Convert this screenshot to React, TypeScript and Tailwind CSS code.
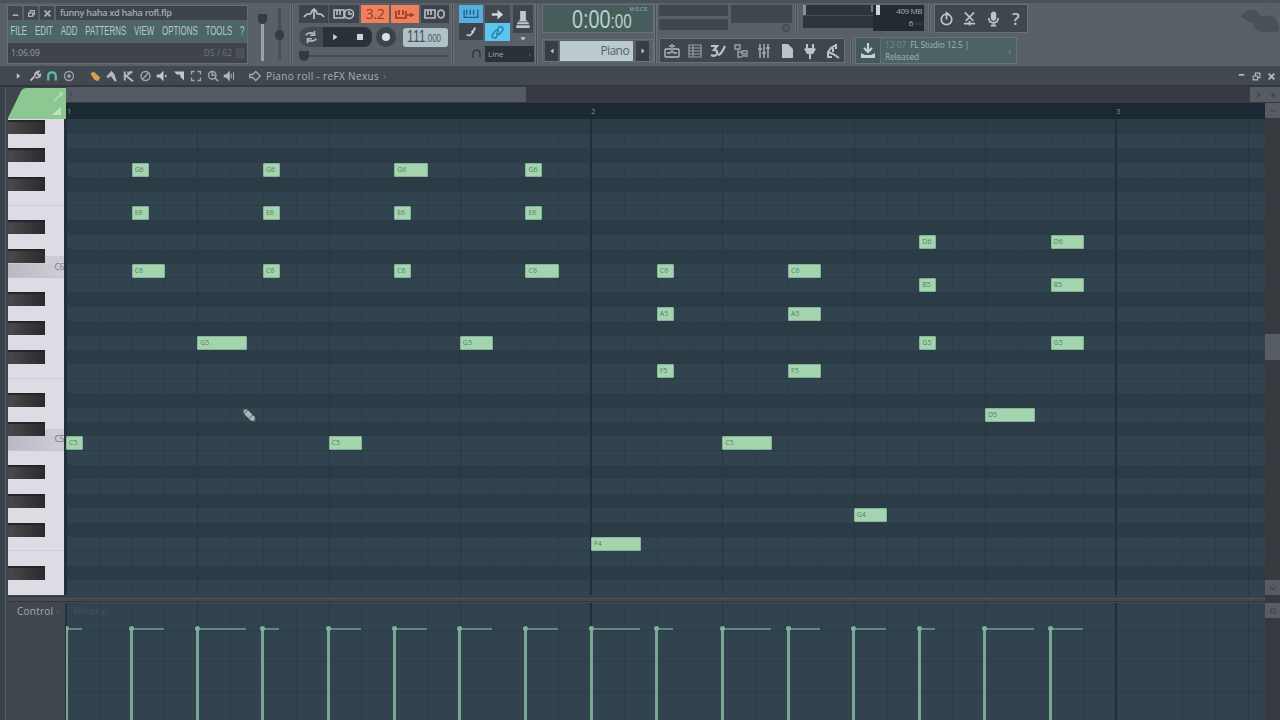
import React from "react";

const ROW = 14.4;
const STEP = 32.82;
const NAMES = ["C", "C#", "D", "D#", "E", "F", "F#", "G", "G#", "A", "A#", "B"];
const TOP_PITCH = 82;
const rows = Array.from({ length: 33 }, (_, i) => TOP_PITCH - i);
const isBlack = (p: number) => [1, 3, 6, 8, 10].includes(p % 12);
const label = (p: number) => NAMES[p % 12] + Math.floor(p / 12);

// [start step, length in steps, pitch]
const notes: [number, number, number][] = [
  [0, 0.5, 60],
  [2, 0.5, 79], [2, 0.5, 76], [2, 1, 72],
  [4, 1.5, 67],
  [6, 0.5, 79], [6, 0.5, 76], [6, 0.5, 72],
  [8, 1, 60],
  [10, 1, 79], [10, 0.5, 76], [10, 0.5, 72],
  [12, 1, 67],
  [14, 0.5, 79], [14, 0.5, 76], [14, 1, 72],
  [16, 1.5, 53],
  [18, 0.5, 72], [18, 0.5, 69], [18, 0.5, 65],
  [20, 1.5, 60],
  [22, 1, 72], [22, 1, 69], [22, 1, 65],
  [24, 1, 55],
  [26, 0.5, 74], [26, 0.5, 71], [26, 0.5, 67],
  [28, 1.5, 62],
  [30, 1, 74], [30, 1, 71], [30, 1, 67],
];

const velocities = Array.from({ length: 16 }, (_, i) => {
  const start = i * 2;
  return { start, len: Math.max(...notes.filter((n) => n[0] === start).map((n) => n[1])) };
});

function Ico({ children, className = "" }: { children: React.ReactNode; className?: string }) {
  return (
    <svg
      viewBox="0 0 16 16"
      className={"shrink-0 " + className}
      fill="none"
      stroke="currentColor"
      strokeWidth="1.8"
    >
      {children}
    </svg>
  );
}

function Sep({ className = "" }: { className?: string }) {
  return <div className={"w-[3px] shrink-0 border-x border-[#6a727a] bg-[#464d54] " + className} />;
}

function TitlePanel() {
  return (
    <div className="mt-[5px] ml-[7px] flex h-[59px] w-[241px] shrink-0 flex-col border border-[#666e75] bg-[#5a6168]">
      <div className="flex h-[14px] gap-[2px] text-[#a9b0b5]">
        {[0, 1, 2].map((i) => (
          <div key={i} className="flex w-[14px] items-center justify-center bg-[#41474e]">
            <Ico className="h-[9px] w-[9px]">
              {i === 0 && <path d="M3 11h10" strokeWidth="3" />}
              {i === 1 && <path d="M3 7h7v6H3zM6 7V3h7v7h-3" strokeWidth="2.4" />}
              {i === 2 && <path d="M3 3l10 10M13 3L3 13" strokeWidth="3.4" />}
            </Ico>
          </div>
        ))}
        <div className="flex-1 bg-[#3e444b] pl-[4px] text-[9.2px] leading-[13px] font-semibold tracking-[-0.32px] whitespace-nowrap text-[#a4abb0]">
          funny haha xd haha rofl.flp
        </div>
      </div>
      <div className="mt-[1px] h-[20px] overflow-hidden bg-[#4d6566]">
        <div className="flex w-[392px] origin-left scale-x-[0.6] gap-[13px] pl-[4px] font-['Liberation_Sans',sans-serif] text-[13.2px] leading-[20px] text-[#b3cbc8]">
          {["FILE", "EDIT", "ADD", "PATTERNS", "VIEW", "OPTIONS", "TOOLS", "?"].map((m) => (
            <span key={m}>{m}</span>
          ))}
        </div>
      </div>
      <div className="mt-[2px] flex h-[20px] items-center bg-[#3e444a] px-[3px] text-[8.5px] text-[#98a0a5]">
        <span>1:06:09</span>
        <span className="ml-auto text-[#6d757b]">D5 / 62</span>
        <div className="ml-[4px] h-[10px] w-[8px] border border-[#50575e] bg-[#474e55]" />
      </div>
    </div>
  );
}

function Sliders() {
  return (
    <div className="mt-[8px] ml-[6px] flex h-[56px] w-[34px] shrink-0 justify-between px-[4px]">
      <div className="flex w-[9px] flex-col items-center pt-[6px]">
        <div className="h-[10px] w-[9px] rounded-b-full rounded-t-sm bg-[#353c43]" />
        <div className="h-[37px] w-[3px] bg-[#9aa1a6]" />
      </div>
      <div className="flex w-[9px] flex-col items-center">
        <div className="h-[22px] w-[3px] bg-[#474e55]" />
        <div className="h-[10px] w-[9px] rounded-full bg-[#353c43]" />
        <div className="h-[20px] w-[3px] bg-[#4a5158]" />
      </div>
    </div>
  );
}

function Transport() {
  return (
    <div className="mt-[5px] ml-[6px] flex w-[150px] shrink-0 flex-col">
      <div className="flex h-[18px] gap-[1px] text-[#b9bfc3]">
        <div className="flex w-[29px] items-center justify-center bg-[#3d444b]">
          <svg viewBox="0 0 24 14" className="h-[14px] w-[24px]" fill="none" stroke="currentColor" strokeWidth="1.7">
            <path d="M12 12V3M2 10q3-4 5-3t3-3M22 10q-3-4-5-3t-3-3M9 5l3-3 3 3" />
          </svg>
        </div>
        <div className="flex w-[30px] items-center justify-center bg-[#3d444b]">
          <svg viewBox="0 0 24 14" className="h-[14px] w-[24px]" fill="none" stroke="currentColor" strokeWidth="1.6">
            <path d="M2 3h10v8H2zM5 3v5M8 3v5" /><circle cx="17" cy="7" r="4.5" /><path d="M17 4v3h3" />
          </svg>
        </div>
        <div className="ml-[1px] flex w-[28px] items-center justify-center bg-[#f0805c] text-[14px] leading-none tracking-tight text-[#933b27]">
          3.2
        </div>
        <div className="ml-[1px] flex w-[28px] items-center justify-center bg-[#f0805c] text-[#933b27]">
          <svg viewBox="0 0 24 14" className="h-[14px] w-[24px]" fill="none" stroke="currentColor" strokeWidth="1.7">
            <path d="M3 4v7h10V4M6 3v5M10 3v5M14 8h7M18 6v4" />
          </svg>
        </div>
        <div className="ml-[1px] flex w-[28px] items-center justify-center bg-[#3d444b]">
          <svg viewBox="0 0 24 14" className="h-[14px] w-[24px]" fill="none" stroke="currentColor" strokeWidth="1.6">
            <path d="M2 3h10v8H2zM5 3v5M8 3v5M15 5q3-4 6 0M21 9q-3 4-6 0M15 5v4M21 5v4" />
          </svg>
        </div>
      </div>
      <div className="mt-[4px] flex h-[20px] items-center text-[#cdd2d5]">
        <div className="flex h-[20px] w-[24px] items-center justify-center rounded-l-full bg-[#434a51]">
          <Ico className="h-[14px] w-[14px] text-[#b5bbbf]">
            <path d="M2 6q3-4 9-2M12 1v5H7M14 10q-3 4-9 2M4 15v-5h5" />
          </Ico>
        </div>
        <div className="flex h-[20px] w-[24px] items-center justify-center bg-[#2b3138]">
          <Ico className="h-[10px] w-[10px]"><path d="M5 3l7 5-7 5z" fill="currentColor" stroke="none" /></Ico>
        </div>
        <div className="flex h-[20px] w-[25px] items-center justify-center rounded-r-lg bg-[#2b3138]">
          <div className="h-[6px] w-[6px] bg-current" />
        </div>
        <div className="ml-[4px] flex h-[20px] w-[20px] items-center justify-center rounded-full bg-[#3c434a]">
          <div className="h-[8px] w-[8px] rounded-full bg-[#dde0e2]" />
        </div>
        <div className="ml-[7px] flex h-[19px] w-[45px] items-center rounded-[3px] bg-[#b1c2c7] pl-[4px]">
          <div className="flex w-[54px] shrink-0 origin-left scale-x-[0.72] items-baseline font-['Liberation_Sans',sans-serif] text-[17px] leading-[18px] text-[#3f535b]">
            111<span className="text-[11px]">.000</span>
          </div>
        </div>
      </div>
      <div className="mt-[3px] flex h-[11px] items-center">
        <div className="h-[10px] w-[10px] rounded-b-full bg-[#343a41]" />
        <div className="h-[2px] flex-1 bg-[#474e55]" />
      </div>
    </div>
  );
}

function Tools() {
  return (
    <div className="mt-[5px] ml-[5px] flex w-[76px] shrink-0 flex-col">
      <div className="flex h-[36px]">
        <div className="flex w-[52px] flex-wrap gap-x-[2px]">
          <div className="flex h-[18px] w-[24px] items-center justify-center bg-[#56aede] text-[#1d5c83]">
            <svg viewBox="0 0 20 14" className="h-[12px] w-[18px]" fill="none" stroke="currentColor" strokeWidth="1.5">
              <path d="M2 2v9h16V2M5 2v6M9 2v6M13 2v6" />
            </svg>
          </div>
          <div className="flex h-[18px] w-[25px] items-center justify-center bg-[#41484f] text-[#d3d7d9]">
            <Ico className="h-[13px] w-[13px]"><path d="M1 8h9" strokeWidth="3" /><path d="M8 2l7 6-7 6z" fill="currentColor" stroke="none" /></Ico>
          </div>
          <div className="flex h-[17px] w-[24px] items-center justify-center bg-[#3d444b] text-[#c7cccf]">
            <Ico className="h-[13px] w-[13px]"><path d="M2 12l4 1 4-4 2-6M8 9l5-5" strokeWidth="2" /></Ico>
          </div>
          <div className="flex h-[18px] w-[25px] items-center justify-center bg-[#5cc6f0] text-[#1e7ba6]">
            <Ico className="h-[15px] w-[15px]"><path d="M7 6l3-4q4-1 4 3l-4 5q-3 1-3-2M9 9l-3 5q-4 0-4-3l4-5q3-1 3 2" strokeWidth="1.4" /></Ico>
          </div>
        </div>
        <div className="ml-[2px] flex w-[20px] shrink-0 flex-col items-center">
          <div className="flex h-[28px] w-[20px] items-center justify-center bg-[#3e454c] text-[#bfc5c8]">
            <svg viewBox="0 0 18 22" className="h-[21px] w-[18px]" fill="currentColor">
              <path d="M6 2h6v9l2 2H4l2-2zM3 14h12v2H3zM2 17h14v3H2z" />
            </svg>
          </div>
          <div className="mt-[4px] h-[3px] w-[4px] rounded-b-full bg-[#b5bbbf]" />
        </div>
      </div>
      <div className="mt-[4px] flex h-[17px] items-center">
        <Ico className="ml-[12px] h-[11px] w-[11px] text-[#343b42]"><path d="M3 14V8q0-5 5-5t5 5v6" strokeWidth="2.4" /></Ico>
        <div className="ml-[3px] flex h-[16px] w-[49px] items-center justify-between bg-[#2b3138] px-[3px] text-[8px] text-[#a4abb0]">
          <span>Line</span>
          <span className="text-[#717981]">›</span>
        </div>
      </div>
    </div>
  );
}

function Clock() {
  return (
    <div className="mt-[4px] ml-[4px] flex w-[112px] shrink-0 flex-col">
      <div className="relative h-[29px] overflow-hidden border border-[#687077] bg-[#465d5c] pl-[29px] font-['Liberation_Sans',sans-serif] text-[#b6d3cc]">
        <div className="flex w-[86px] origin-left scale-x-[0.76] items-baseline text-[26px] leading-[28px]">
          <span>0:00</span>
          <span className="text-[20px]">:00</span>
        </div>
        <div className="absolute top-[1px] right-[6px] text-[5px] leading-[6px] text-[#9bb7b1]">M:S:CS</div>
      </div>
      <div className="mt-[6px] flex h-[23px] items-center border border-[#6a7279] px-[1px] text-[#c1c7ca]">
        <div className="ml-[1px] flex h-[20px] w-[13px] shrink-0 items-center justify-center bg-[#373e45]">
          <Ico className="h-[8px] w-[8px]"><path d="M11 3L5 8l6 5z" fill="currentColor" stroke="none" /></Ico>
        </div>
        <div className="ml-[2px] flex h-[20px] w-[73px] items-center justify-end bg-[#bbcace] pr-[4px] text-[12px] tracking-[-0.6px] text-[#50616a]">Piano</div>
        <div className="ml-[3px] flex h-[20px] w-[13px] shrink-0 items-center justify-center bg-[#373e45]">
          <Ico className="h-[8px] w-[8px]"><path d="M5 3l6 5-6 5z" fill="currentColor" stroke="none" /></Ico>
        </div>
      </div>
    </div>
  );
}

const mixerIcons: React.ReactNode[] = [
  <path d="M1 6h14M1 14h14M1 6v8M15 6v8M3 10h3l2-2 2 2h3M8 1v4M5 3h6" />,
  <path d="M2 2h12v12H2zM2 5h12M2 8h12M2 11h12M6 2v12" strokeWidth="1.2" />,
  <path d="M1 3h6L4 7q4 0 3 4-2 3-6 1M8 12q3 0 7-9" strokeWidth="2.2" />,
  <path d="M2 2h5v4H2zM5 6v8h4M5 9h5M9 8h5v3H9zM9 13h6" strokeWidth="1.5" />,
  <path d="M4 1v14M8 1v14M12 1v14M2 6h4M6 10h4M10 5h4" />,
  <path d="M3 1h6l5 5v9H3z" fill="currentColor" stroke="none" />,
  <path d="M4 1h2v4h4V1h2v4l2 1-3 5H9v5H7v-5H5L2 6l2-1z" fill="currentColor" stroke="none" />,
  <path d="M3 14V9l3-4 5-3M3 9l5 2 6 4M8 5v4M2 14h5M11 1v5" strokeWidth="2" />,
];

function Center() {
  return (
    <div className="mt-[4px] ml-[2px] flex w-[372px] shrink-0 flex-col">
      <div className="flex h-[29px]">
        <div className="flex w-[69px] shrink-0 flex-col gap-[3px] pt-[1px]">
          <div className="h-[11px] bg-[#3f464d]" />
          <div className="h-[11px] bg-[#3f464d]" />
        </div>
        <div className="ml-[3px] flex w-[61px] shrink-0 flex-col pt-[1px]">
          <div className="h-[18px] bg-[#3f464d]" />
          <div className="mt-[1px] mr-[2px] h-[8px] w-[8px] self-end rounded-full border border-[#3c434a] bg-[#525960]" />
        </div>
        <Sep className="ml-[3px] h-[29px]" />
        <div className="ml-[5px] flex h-[27px] w-[121px] shrink-0 bg-[#5a6168] pt-[1px]">
          <div className="flex h-[23px] w-[70px] flex-col bg-[#2c343c]">
            <div className="flex h-[11px] justify-between border-b border-[#465058]">
              <div className="h-[10px] w-[3px] bg-[#8a9297]" />
              <div className="h-[7px] w-[2px] bg-[#747c82]" />
            </div>
          </div>
          <div className="flex h-[26px] w-[51px] bg-[#222a32] text-[8px] text-[#a8b0b4]">
            <div className="ml-[3px] h-[10px] w-[4px] bg-[#cfd5d7]" />
            <div className="flex flex-1 flex-col items-end pr-[2px] leading-[12px] tracking-[-0.4px]">
              <span>409 MB</span>
              <span>6<span className="text-[#56616a]"> ▫▫▫</span></span>
            </div>
          </div>
        </div>
        <Sep className="ml-[4px] h-[29px]" />
        <div className="ml-[3px] flex w-[94px] shrink-0 items-center justify-around border border-[#697178] bg-[#3f464d] text-[#bdc3c7]">
          <Ico className="h-[15px] w-[15px]"><circle cx="8" cy="9" r="5.6" /><path d="M8 9V2l3 2" /></Ico>
          <Ico className="h-[16px] w-[15px]"><path d="M3 1l9 9M13 1L4 10M2 13h12M8 10v5" /></Ico>
          <Ico className="h-[16px] w-[15px]"><rect x="6" y="1" width="4" height="8" rx="2" fill="currentColor" /><path d="M3 7q0 5 5 5t5-5M8 12v3M5 15h6" /></Ico>
          <span className="w-[14px] text-center text-[17px] leading-none font-semibold">?</span>
        </div>
      </div>
      <div className="mt-[4px] flex h-[27px] items-center">
        <div className="flex h-[25px] w-[186px] shrink-0 items-center justify-around border border-[#697178] bg-[#3f464d] text-[#bcc2c5]">
          {mixerIcons.map((ic, i) => (
            <Ico key={i} className={i < 5 && i !== 2 ? "h-[16px] w-[16px] text-[#979fa4]" : "h-[16px] w-[16px]"}>{ic}</Ico>
          ))}
        </div>
        <Sep className="ml-[5px] h-[27px]" />
        <div className="ml-[2px] flex h-[27px] w-[162px] shrink-0 items-center border border-[#687379] bg-[#4c6264]">
          <div className="flex h-full w-[25px] items-center justify-center border-r border-[#5f7175] bg-[#45585b] text-[#c3d2d2]">
            <Ico className="h-[16px] w-[16px]"><path d="M8 0v8M4 5l4 4 4-4" strokeWidth="2.2" /><path d="M1 10v5h14v-5l-4 2H5z" fill="currentColor" stroke="none" /></Ico>
          </div>
          <div className="flex-1 pl-[4px] text-[8.4px] leading-[11.5px] tracking-[-0.15px] whitespace-nowrap text-[#9fb7b7]">
            <div><span className="text-[#718a8c]">12-07</span>&nbsp; FL Studio 12.5 |</div>
            <div>Released</div>
          </div>
          <span className="mr-[5px] text-[9px] text-[#879fa0]">›</span>
        </div>
      </div>
    </div>
  );
}

function FruitMark() {
  return (
    <div className="mt-[4px] ml-auto h-[60px] w-[50px] shrink-0">
      <svg viewBox="0 0 50 60" className="h-[60px] w-[50px]" fill="#495057">
        <path d="M11 12q3-5 10-6 6 0 8 4 3 3 6 2 6-2 10 2 5 6 4 13-3 2-7 0-5 2-11 1-7-2-8-9-3 0-5-2-4-1-7-5z" />
        <path d="M35 6l7-5M42 30q-4 15-18 26" fill="none" stroke="#535a61" />
      </svg>
    </div>
  );
}

function TopBar() {
  return (
    <div className="flex h-[66px] shrink-0 overflow-hidden border-t-[3px] border-[#4b5259] bg-[#596067]">
      <div className="-mt-[3px] flex w-full">
        <TitlePanel />
        <Sliders />
        <Sep className="mt-[4px] ml-[2px] h-[60px]" />
        <Transport />
        <Sep className="mt-[4px] ml-[2px] h-[60px]" />
        <Tools />
        <Sep className="mt-[4px] h-[60px]" />
        <Clock />
        <Sep className="mt-[4px] h-[60px]" />
        <Center />
        <FruitMark />
      </div>
    </div>
  );
}

const editIcons: [React.ReactNode, string][] = [
  [<path d="M5 3l6 5-6 5z" fill="currentColor" stroke="none" />, "w-[9px] text-[#c3c8cb]"],
  [<path d="M2 14l6-6M8 8q-1-5 5-6l-2 3 2 2 2-1q0 5-6 4" strokeWidth="2.4" />, "ml-[5px] w-[14px] text-[#b4babe]"],
  [<path d="M3 14V8q0-5 5-5t5 5v6" strokeWidth="3" />, "ml-[3px] w-[14px] text-[#56c596]"],
  [<><circle cx="8" cy="8" r="6" /><circle cx="8" cy="8" r="1.6" fill="currentColor" /></>, "ml-[3px] w-[14px] text-[#9aa1a7]"],
  [<path d="M2 5l4-3 9 8-3 5-5-2z" fill="currentColor" stroke="none" />, "ml-[12px] w-[14px] text-[#d69d4b]"],
  [<path d="M1 9l7-8 4 5 3 9h-3L7 8l-3 3z" fill="currentColor" stroke="none" />, "ml-[3px] w-[13px] text-[#b4babe]"],
  [<><path d="M3 2v12M13 2L5 8l9 7" strokeWidth="2.6" /><path d="M6 3h7" /></>, "ml-[4px] w-[13px] text-[#b4babe]"],
  [<><circle cx="8" cy="8" r="6" /><path d="M4 12l8-8" /></>, "ml-[4px] w-[13px] text-[#9fa6ab]"],
  [<path d="M1 6h4l5-5v14l-5-5H1zM12 6l3 2-3 2z" fill="currentColor" stroke="none" />, "ml-[3px] w-[14px] text-[#c3c8cb]"],
  [<path d="M1 2h13v12L9 9V6H4z" fill="currentColor" stroke="none" />, "ml-[4px] w-[13px] text-[#c3c8cb]"],
  [<path d="M2 6V2h4M10 2h4v4M14 10v4h-4M6 14H2v-4" />, "ml-[3px] w-[14px] text-[#9fa6ab]"],
  [<><circle cx="7" cy="7" r="5" /><path d="M10 10l5 5M7 3v4h4" strokeWidth="2" /></>, "ml-[3px] w-[14px] text-[#9fa6ab]"],
  [<><path d="M1 6h3l5-5v14l-5-5H1z" fill="currentColor" stroke="none" /><path d="M11 5v6M14 3v10" strokeWidth="1.2" /></>, "ml-[2px] w-[14px] text-[#b4babe]"],
];

function EditorTitle() {
  return (
    <div className="flex h-[21px] shrink-0 items-center border-b-2 border-[#32383e] bg-[#41484f] pt-[1px] pl-[6px]">
      <div className="flex items-center pl-[8px]">
        {editIcons.map(([ic, cls], i) => (
          <Ico key={i} className={"h-[12px] " + cls}>{ic}</Ico>
        ))}
        <Ico className="ml-[13px] h-[12px] w-[12px] text-[#a4abb0]"><path d="M1 6h4l4-4 6 6-6 6-4-4H1z" /></Ico>
        <span className="ml-[5px] text-[10px] leading-none tracking-[0.36px] whitespace-nowrap text-[#a9b0b5]">Piano roll - reFX Nexus</span>
        <span className="ml-[4px] text-[9px] text-[#777f86]">›</span>
      </div>
      <div className="ml-auto flex items-center gap-[6px] pr-[4px] text-[#b4babe]">
        <Ico className="h-[9px] w-[9px]"><path d="M3 5h10" strokeWidth="3" /></Ico>
        <Ico className="h-[9px] w-[9px]"><path d="M2 7h8v7H2zM6 7V2h8v8h-4" strokeWidth="2" /></Ico>
        <Ico className="h-[9px] w-[9px]"><path d="M3 3l10 10M13 3L3 13" strokeWidth="3.4" /></Ico>
      </div>
    </div>
  );
}

function Keyboard() {
  return (
    <div className="relative z-10 flex h-[476px] w-[58px] flex-col overflow-hidden border-r-2 border-[#26303a] bg-[#dddce4] pt-[0.7px]">
      {rows.map((p) => {
        const c = p % 12;
        return (
          <div
            key={p}
            style={{ height: ROW }}
            className={
              "relative flex shrink-0 " +
              (c === 0
                ? "border-b border-[#c4c3cd] bg-linear-to-r from-[#b9b9c4] to-[#cfced6]"
                : c === 5
                  ? "border-b border-[#cdccd6]"
                  : c === 1
                    ? "bg-linear-to-b from-[#dddce4] from-50% to-[#cccbd4] to-50%"
                    : "")
            }
          >
            {isBlack(p) && <div className="h-[14px] w-[37px] bg-linear-to-r from-[#4a4a4d] to-[#2b2b2e] shadow-[inset_0_2px_1px_#252529]" />}
            {c === 0 && <span className="absolute -top-[3px] right-0 text-[9px] leading-[12px] tracking-[-0.6px] text-[#777681]">{label(p)}</span>}
          </div>
        );
      })}
    </div>
  );
}

function VerticalLines() {
  return (
    <div className="pointer-events-none absolute inset-0 overflow-hidden">
      {Array.from({ length: 37 }, (_, i) => (
        <div
          key={i}
          style={{ left: i * STEP }}
          className={
            "absolute inset-y-0 " +
            (i % 16 === 0 ? "-ml-px w-[2px] bg-[#20303b]" : i % 4 === 0 ? "w-px bg-[#243743]" : "w-px bg-[#2a3d49]")
          }
        />
      ))}
    </div>
  );
}

function NoteGrid() {
  return (
    <div className="relative h-[476px] w-[1199px] overflow-hidden bg-[#2b3c47] pt-[0.7px]">
      {rows.map((p) => (
        <div
          key={p}
          style={{ height: ROW }}
          className={
            (isBlack(p) ? "bg-[#2b3c47]" : "bg-[#30434e]") +
            (p % 12 === 0 || p % 12 === 5 ? " border-b border-[#293b46]" : "")
          }
        />
      ))}
      <VerticalLines />
      {notes.map(([s, l, p], i) => (
        <div
          key={i}
          style={{ left: s * STEP, top: (TOP_PITCH - p) * ROW + 0.6, width: l * STEP + 0.6 }}
          className="absolute h-[14px] overflow-hidden rounded-[1px] border border-[#84b596] bg-[#a3d4ae] pl-[2px] text-[7px] leading-[12px] text-[#587e68]"
        >
          {label(p)}
        </div>
      ))}
      <svg viewBox="0 0 16 16" className="absolute top-[288px] left-[175px] h-[16px] w-[16px]">
        <path d="M2 3l4-1 8 8v4l-4 0-7-7z" fill="#aeb4b8" stroke="#59646c" />
        <path d="M3 7l4-4M8 11l4-3" stroke="#59646c" />
      </svg>
    </div>
  );
}

function ControlLane() {
  return (
    <div className="relative h-[117px] w-[1199px] overflow-hidden bg-[#30434e]">
      <div className="flex flex-col">
        <div className="h-[28px] border-b border-[#2a3c47] pl-[7px] text-[9px] leading-[16px] text-[#42545f]">Velocity</div>
        <div className="h-[31px] border-b border-[#2a3c47]" />
        <div className="h-[30px] border-b border-[#2a3c47]" />
      </div>
      <VerticalLines />
      {velocities.map(({ start, len }) => (
        <div key={start} style={{ left: start * STEP - 2.5, width: len * STEP + 2 }} className="absolute top-[23px] h-[94px]">
          <div className="mt-[2px] ml-[2px] h-[2px] bg-[#5c8a7b]" />
          <div className="-mt-[1px] ml-[1px] h-[91px] w-[3px] bg-[#77a793]" />
          <div className="absolute top-0 left-0 h-[5px] w-[5px] rounded-full bg-[#7fb098]" />
        </div>
      ))}
    </div>
  );
}

function ScrollButton({ d }: { d: string }) {
  return (
    <div className="flex h-[15px] w-[15px] shrink-0 items-center justify-center bg-[#565c62] text-[#3d444a]">
      <Ico className="h-[8px] w-[8px]"><path d={d} strokeWidth="2.4" /></Ico>
    </div>
  );
}

export default function App() {
  return (
    <div className="flex h-[720px] w-[1280px] flex-col overflow-hidden bg-[#3f464c] font-['Open_Sans','Noto_Sans',sans-serif] select-none">
      <TopBar />
      <EditorTitle />
      <div className="flex h-[633px] border-l-[5px] border-[#38424b]">
        <div className="flex w-[1260px] shrink-0 flex-col border-l border-[#566069] pl-[2px]">
          <div className="flex h-[32px] shrink-0">
            <svg viewBox="0 0 58 32" className="h-[32px] w-[58px]">
              <path d="M18 1h40v31H0v-1L13 4q2-3 5-3z" fill="#8dc791" />
              <path d="M46 14l7-7M51 6h3v3" stroke="#b5ddb6" strokeWidth="1.5" fill="none" />
              <path d="M53 20v8h-9z" fill="#c0e4c0" />
            </svg>
            <div className="flex w-[1199px] flex-col">
              <div className="flex h-[16px] bg-[#363b43]">
                <div className="h-[15px] w-[460px] bg-[#545a62] pl-[4px] text-[9px] leading-[14px] text-[#373e44]">‹</div>
                <div className="ml-auto"><ScrollButton d="M6 3l5 5-5 5" /></div>
              </div>
              <div className="relative h-[16px] bg-[#1d2932] text-[8px] leading-[16px] text-[#7d8a93]">
                <span className="absolute left-[1px]">1</span>
                <span className="absolute left-[525px]">2</span>
                <span className="absolute left-[1050px]">3</span>
              </div>
            </div>
          </div>
          <div className="flex h-[476px] shrink-0">
            <Keyboard />
            <NoteGrid />
          </div>
          <div className="my-[1px] h-[6px] shrink-0 border-y border-[#30373d] bg-[#434a50]" />
          <div className="flex h-[117px] shrink-0">
            <div className="flex w-[58px] items-start border-r border-[#29333c] pt-[2px] pl-[9px] text-[10px] leading-[12px] text-[#a4abb0]">
              <span className="tracking-[0.25px]">Control</span>
              <span className="ml-[3px] text-[8px] text-[#6f777e]">›</span>
            </div>
            <ControlLane />
          </div>
        </div>
        <div className="flex w-[15px] shrink-0 flex-col bg-[#363a3f]">
          <div className="flex flex-col gap-[1px]">
            <ScrollButton d="M3 8h10M8 3v10" />
            <ScrollButton d="M3 8h10" />
          </div>
          <div className="mt-[216px] h-[26px] bg-[#575c62]" />
          <div className="mt-[220px] flex flex-col gap-[8px]">
            <ScrollButton d="M3 6l5 5 5-5" />
            <ScrollButton d="M4 4h8v8H4z" />
          </div>
        </div>
      </div>
    </div>
  );
}
